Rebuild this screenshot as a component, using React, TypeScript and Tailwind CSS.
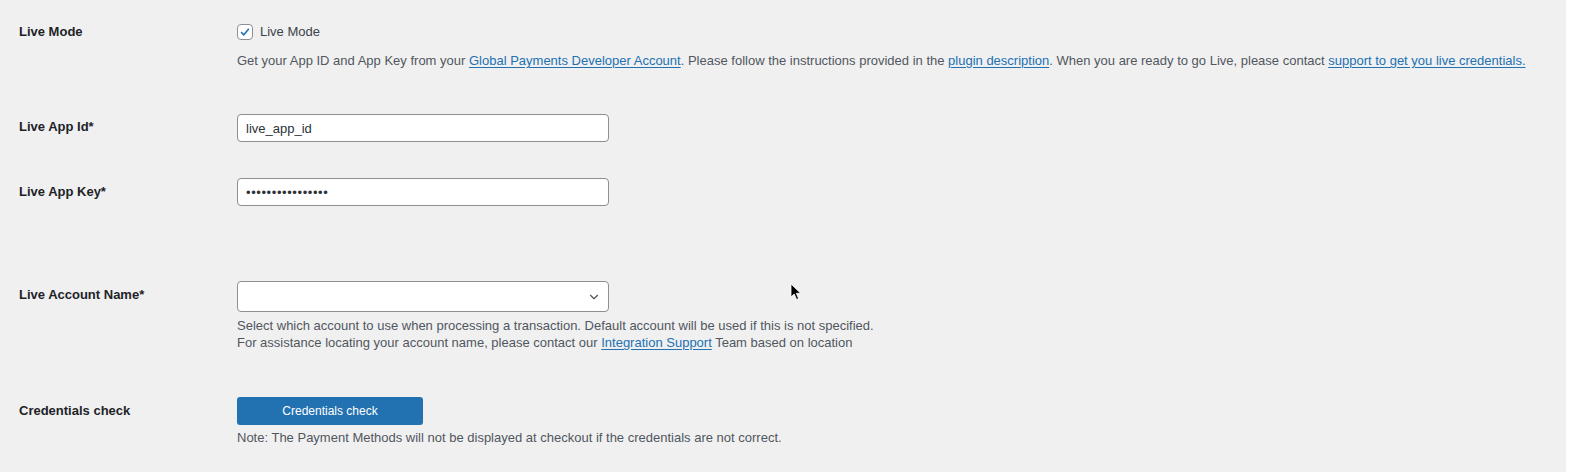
import { ChevronDown } from "lucide-react";

const font = { fontFamily: '"Liberation Sans", Arial, sans-serif' };

function Link({ children }: { children: React.ReactNode }) {
  return <a className="text-[#2271b1] underline underline-offset-2 cursor-pointer">{children}</a>;
}

function Label({ children, pad }: { children: React.ReactNode; pad: string }) {
  return (
    <div className={`w-[218px] shrink-0 font-semibold text-[#1d2327] leading-[18px] ${pad}`}>
      {children}
    </div>
  );
}

export default function App() {
  return (
    <div style={font} className="relative w-[1573px] h-[476px] bg-white text-[13px]">
      <div className="h-[472px] w-[1566px] bg-[#f0f0f1] pl-[19px] pt-[23px]">
        {/* Live mode */}
        <div className="flex">
          <Label pad="">Live Mode</Label>
          <div>
            <label className="flex items-center gap-[7px] h-[18px] text-[#3c434a]">
              <span className="flex h-[16px] w-[16px] items-center justify-center rounded-[4px] border border-[#8c8f94] bg-white">
                <svg viewBox="0 0 16 16" className="h-[14px] w-[14px]">
                  <path d="M3.5 8.2 6.6 11.2 12.4 4.2" fill="none" stroke="#2271b1" strokeWidth="1.8" />
                </svg>
              </span>
              Live Mode
            </label>
            <p className="mt-[11px] leading-[18px] text-[#50575e]">
              Get your App ID and App Key from your <Link>Global Payments Developer Account</Link>. Please follow the
              instructions provided in the <Link>plugin description</Link>. When you are ready to go Live, please
              contact <Link>support to get you live credentials.</Link>
            </p>
          </div>
        </div>

        {/* App id */}
        <div className="flex mt-[44px]">
          <Label pad="pt-[4px]">Live App Id*</Label>
          <input
            readOnly
            value="live_app_id"
            className="h-[28px] w-[372px] rounded-[4px] border border-[#8c8f94] bg-white px-[8px] text-[#2c3338] outline-none"
          />
        </div>

        {/* App key */}
        <div className="flex mt-[36px]">
          <Label pad="pt-[5px]">Live App Key*</Label>
          <input
            readOnly
            value="••••••••••••••••"
            className="h-[28px] w-[372px] rounded-[4px] border border-[#8c8f94] bg-white px-[8px] text-[#2c3338] outline-none tracking-[0.6px]"
          />
        </div>

        {/* Account name */}
        <div className="flex mt-[75px]">
          <Label pad="pt-[5px]">Live Account Name*</Label>
          <div>
            <div className="flex h-[31px] w-[372px] items-center justify-end rounded-[4px] border border-[#8c8f94] bg-white pr-[7px]">
              <ChevronDown className="h-[14px] w-[14px] text-[#50575e]" strokeWidth={2} />
            </div>
            <p className="mt-[5px] leading-[17px] text-[#50575e]">
              Select which account to use when processing a transaction. Default account will be used if this is not
              specified.
              <br />
              For assistance locating your account name, please contact our <Link>Integration Support</Link> Team based
              on location
            </p>
          </div>
        </div>

        {/* Credentials */}
        <div className="flex mt-[46px]">
          <Label pad="pt-[5px]">Credentials check</Label>
          <div>
            <button className="h-[28px] w-[186px] rounded-[3px] bg-[#2271b1] text-[12px] text-white">
              Credentials check
            </button>
            <p className="mt-[4px] leading-[18px] text-[#50575e]">
              Note: The Payment Methods will not be displayed at checkout if the credentials are not correct.
            </p>
          </div>
        </div>
      </div>

      {/* mouse pointer */}
      <svg viewBox="0 0 12 18" className="absolute left-[790px] top-[283px] h-[18px] w-[12px]">
        <path d="M1 1 L1 14 L4.2 11 L6.6 16.5 L8.6 15.6 L6.3 10.3 L10.6 10.3 Z" fill="#000" stroke="#fff" strokeWidth="0.8" />
      </svg>
    </div>
  );
}
